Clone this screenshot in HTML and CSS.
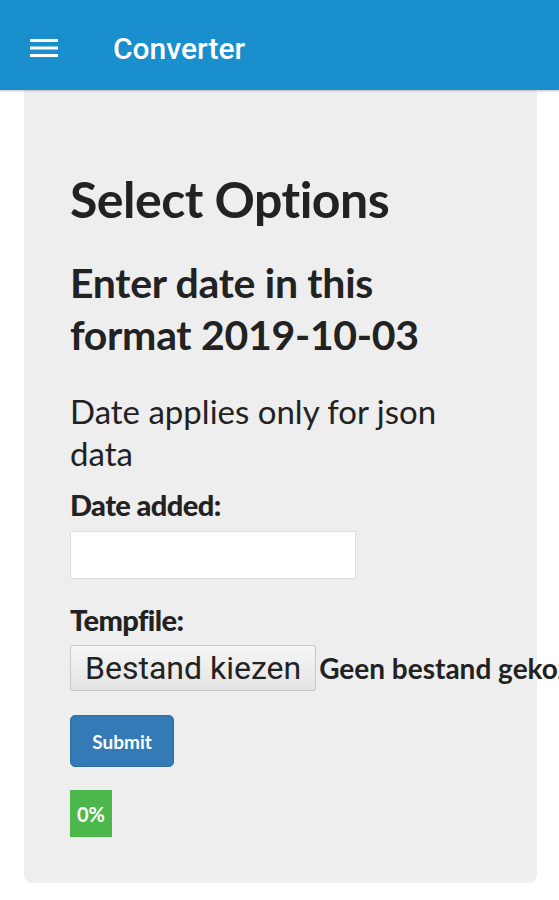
FILE: index.html
```html
<!DOCTYPE html>
<html>
<head>
<meta charset="utf-8">
<link rel="stylesheet" href="styles.css">
</head>
<body>
<header class="topbar">
  <svg class="menu-icon" width="28" height="18" viewBox="0 0 28 18"><rect x="0" y="0" width="28" height="3" fill="#fff"/><rect x="0" y="7.5" width="28" height="3" fill="#fff"/><rect x="0" y="15" width="28" height="3" fill="#fff"/></svg>
  <span class="title">Converter</span>
</header>
<main class="card">
  <h1 class="h-main">Select Options</h1>
  <h2 class="h-sub">Enter date in this format 2019-10-03</h2>
  <h3 class="h-note">Date applies only for json data</h3>
  <form class="form">
    <label class="label">Date added:</label>
    <div class="input"></div>
    <label class="label label-temp">Tempfile:</label>
    <div class="file-row"><span class="file-btn">Bestand kiezen</span><span class="file-name">Geen bestand gekozen</span></div>
    <div class="submit">Submit</div>
    <div class="progress">0%</div>
  </form>
</main>
</body>
</html>
```
FILE: styles.css
```css
html, body { margin: 0; padding: 0; background: #fff; overflow: hidden; }
body { width: 559px; height: 900px; font-family: Lato, "Open Sans", sans-serif; color: #222; }
.topbar { height: 90px; background: #1a8fcd; display: flex; align-items: center; padding: 6px 0 0 30px; box-sizing: border-box; box-shadow: 0 1px 2px rgba(0,0,0,0.25); position: relative; z-index: 1; }
.menu-icon { display: block; }
.title { font-family: Roboto, sans-serif; font-weight: 500; font-size: 30px; color: #fff; margin-left: 55px; }
.card { margin: 0 22px 0 24px; height: 793px; background: #eeeeee; border-radius: 0 0 8px 8px; padding: 79px 0 0 46px; box-sizing: border-box; }
.h-main { margin: 0; font-size: 50px; font-weight: 700; line-height: 60px; letter-spacing: -0.5px; }
.h-sub { margin: 28px 0 0; font-size: 41px; font-weight: 700; line-height: 52px; width: 360px; letter-spacing: -0.3px; }
.h-note { margin: 29px 0 0; font-size: 33px; font-weight: 400; line-height: 42px; width: 390px; }
.form { display: flex; flex-direction: column; align-items: flex-start; }
.label { font-size: 29px; font-weight: 900; line-height: 32px; margin-top: 15px; letter-spacing: -0.6px; }
.input { width: 284px; height: 46px; background: #fff; border: 1px solid #ddd; margin-top: 10px; }
.label-temp { margin-top: 25px; }
.file-row { display: flex; align-items: center; margin-top: 9px; white-space: nowrap; }
.file-btn { font-family: Roboto, sans-serif; font-size: 32px; color: #222; background: linear-gradient(#f6f6f6, #e4e4e4); border: 1px solid #c8c8c8; border-radius: 2px; padding: 0 14px; height: 44px; line-height: 44px; }
.file-name { font-size: 28px; font-weight: 700; margin-left: 3px; }
.submit { margin-top: 24px; background: #337ab7; color: #fff; font-weight: 700; font-size: 19px; border-radius: 5px; width: 104px; height: 52px; display: flex; align-items: center; justify-content: center; border: 1px solid #2e6da4; box-sizing: border-box; }
.progress { margin-top: 23px; background: #4cb84c; color: #fff; font-weight: 700; font-size: 20px; width: 42px; height: 47px; display: flex; align-items: center; justify-content: center; }
```
